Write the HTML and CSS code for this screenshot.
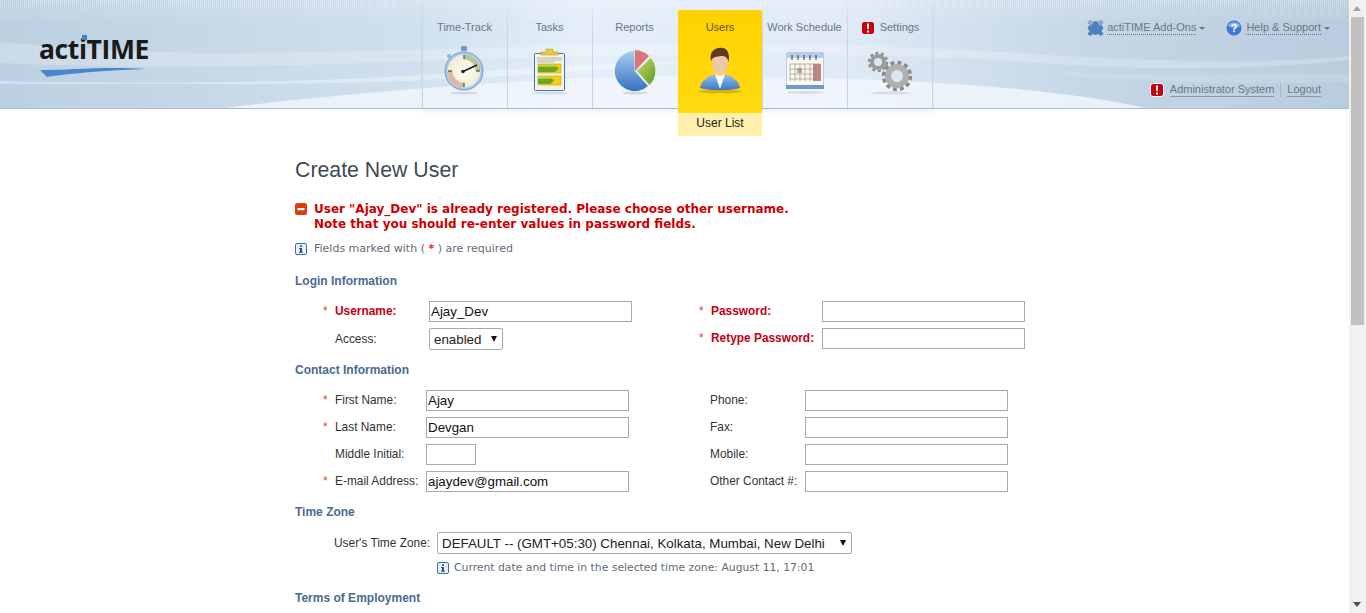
FILE: index.html
```html
<!DOCTYPE html>
<html>
<head>
<meta charset="UTF-8">
<title>actiTIME - Create New User</title>
<link rel="stylesheet" href="styles.css">
</head>
<body>
<div class="page">
<div class="header">
	<svg class="header_bg" viewBox="0 0 1349 109" preserveAspectRatio="none">
		<defs>
			<linearGradient id="bgGrad" x1="0" x2="1" y1="0" y2="0">
				<stop offset="0" stop-color="#bdd0e1"/>
				<stop offset="0.3" stop-color="#cfdfed"/>
				<stop offset="0.43" stop-color="#e4eff9"/>
				<stop offset="0.62" stop-color="#e0ebf6"/>
				<stop offset="0.8" stop-color="#c6d7e7"/>
				<stop offset="1" stop-color="#b9ccdd"/>
			</linearGradient>
			<linearGradient id="fade" x1="0" x2="0" y1="0" y2="1">
				<stop offset="0" stop-color="#fff" stop-opacity="0.35"/>
				<stop offset="1" stop-color="#fff" stop-opacity="0"/>
			</linearGradient>
			<pattern id="stripes" width="2" height="24" patternUnits="userSpaceOnUse">
				<rect width="1" height="24" fill="#fff"/>
			</pattern>
			<mask id="stripeMask"><rect width="1349" height="24" fill="url(#fade)"/></mask>
		</defs>
		<rect width="1349" height="109" fill="url(#bgGrad)"/>
		<rect width="1349" height="24" fill="url(#stripes)" mask="url(#stripeMask)"/>
		<path d="M0 42 C60 47 120 52 210 53 C300 53 400 50 480 48 C600 45 800 40 1000 52 C1120 60 1250 66 1349 56 L1349 60 C1240 72 1120 70 1000 60 C800 50 600 56 450 60 C300 66 150 70 0 63Z" fill="#fff" fill-opacity="0.22"/>
		<path d="M0 81 C150 84 320 83 450 73 C520 68 620 63 700 61 C600 70 420 86 200 84 C120 84 60 84 0 84Z" fill="#fff" fill-opacity="0.35"/>
		<path d="M225 108 C320 96 400 90 480 84 C600 76 680 74 780 77 C950 80 1080 92 1145 108Z" fill="#f1f6fc" fill-opacity="0.85"/>
		<path d="M1066 72 C1180 78 1280 72 1349 74 L1349 82 C1280 84 1160 84 1066 76Z" fill="#fff" fill-opacity="0.12"/>
		<rect y="108" width="1349" height="1" fill="#a7bdd3"/>
	</svg>

	<div class="logo">
		<span class="logo_text">actiTIME<i class="logo_dot"></i></span>
		<svg class="logo_swoosh" width="110" height="14" viewBox="0 0 110 14"><path d="M1 4 C30 4 70 0 106 3 C80 4 40 6 8 11Z" fill="#4a86d0"/></svg>
	</div>

	<ul class="nav">
		<li class="tab">
			<div class="tab_name">Time-Track</div>
			<svg class="tab_icon" viewBox="0 0 50 50">
				<defs>
					<radialGradient id="face"><stop offset="0" stop-color="#fffef6"/><stop offset="1" stop-color="#eeebd4"/></radialGradient>
				</defs>
				<ellipse cx="24" cy="48" rx="14" ry="1.500" fill="#9aa6b0" opacity=".35"/>
				<rect x="21" y="1" width="6" height="5" rx="1" fill="#6d9ad6"/>
				<circle cx="9" cy="11" r="2" fill="#8db0de"/>
				<circle cx="24" cy="26" r="19" fill="#a9c8ec" stroke="#6f9ad4"/>
				<circle cx="24" cy="26" r="16.500" fill="url(#face)"/>
				<path d="M24 12 A14 14 0 0 1 38 26" fill="none" stroke="#b4c793" stroke-width="5"/>
				<path d="M24 40 A14 14 0 0 1 10 26" fill="none" stroke="#e2b6a0" stroke-width="5"/>
				<path d="M24 10v4M24 38v4M8 26h4M36 26h4" stroke="#333" stroke-width="1"/>
				<path d="M22 27 L37 20" stroke="#222" stroke-width="1.600"/>
				<circle cx="23" cy="26.500" r="1.800" fill="#222"/>
			</svg>
		</li>
		<li class="tab">
			<div class="tab_name">Tasks</div>
			<svg class="tab_icon" viewBox="0 0 50 50">
				<ellipse cx="25" cy="48" rx="18" ry="1.500" fill="#9aa6b0" opacity=".3"/>
				<rect x="9.500" y="8.500" width="30" height="37" rx="1" fill="#f7f3e2" stroke="#3f72c0"/>
				<path d="M16 10 v-3 h5 v-3 h7 v3 h5 v3z" fill="#e8c93c" stroke="#b89a20" stroke-width=".5"/>
				<path d="M12 13h25M12 15h25M12 17h17" stroke="#999" stroke-width=".7"/>
				<rect x="13" y="19" width="23" height="9" fill="#f2cd1a" stroke="#b59a18" stroke-width=".5"/>
				<rect x="13" y="31" width="23" height="9" fill="#f2cd1a" stroke="#b59a18" stroke-width=".5"/>
				<path d="M13 20h17l4 3.500 -4 3.500h-17z" fill="#6fa51c"/>
				<path d="M13 32h12l4 3.500 -4 3.500h-12z" fill="#6fa51c"/>
				<path d="M13 20h17l2 1.800h-19z" fill="#b0dc55"/>
				<path d="M13 32h12l2 1.800h-14z" fill="#b0dc55"/>
			</svg>
		</li>
		<li class="tab">
			<div class="tab_name">Reports</div>
			<svg class="tab_icon" viewBox="0 0 50 50">
				<defs>
					<linearGradient id="pieBlue" x1="0" x2="0" y1="0" y2="1"><stop offset="0" stop-color="#a9cdf0"/><stop offset="1" stop-color="#3673bf"/></linearGradient>
					<linearGradient id="pieGreen" x1="0" x2="1" y1="0" y2="1"><stop offset="0" stop-color="#c5dd6a"/><stop offset="1" stop-color="#5d9a1a"/></linearGradient>
				</defs>
				<ellipse cx="25" cy="48" rx="13" ry="1.500" fill="#9aa6b0" opacity=".35"/>
				<path d="M24.500 6 A20 20 0 1 0 38 41 L24.500 26Z" fill="url(#pieBlue)"/>
				<path d="M25 5 A21 21 0 0 1 39 11 L25 26Z" fill="#d9757b"/>
				<path d="M40.700 13 A20 20 0 0 1 39.500 40 L27 26Z" fill="url(#pieGreen)"/>
			</svg>
		</li>
		<li class="tab tab_active">
			<div class="tab_name">Users</div>
			<svg class="tab_icon" viewBox="0 0 50 50">
				<defs>
					<linearGradient id="suit" x1="0" x2="0" y1="0" y2="1"><stop offset="0" stop-color="#9cc2ec"/><stop offset="1" stop-color="#3a76c0"/></linearGradient>
				</defs>
				<ellipse cx="25" cy="46.500" rx="22" ry="1.800" fill="#a88c00" opacity=".45"/>
				<path d="M5 43 C6 36 12 32 19 29 L25 33 L31 29 C38 32 44 36 45 43 C35 46 15 46 5 43Z" fill="url(#suit)"/>
				<path d="M20 29 L25 44 L30 29 L25 31Z" fill="#fff"/>
				<ellipse cx="25" cy="18" rx="8" ry="11.500" fill="#efc9a6"/>
				<path d="M16 16 C14 7 20 2 27 3 C33 3 35 10 33.500 17 C32.500 12 30 11 26 11 C22 12 18 11 16 16Z" fill="#5b3a26"/>
			</svg>
			<div class="sub_tab">User List</div>
		</li>
		<li class="tab">
			<div class="tab_name">Work Schedule</div>
			<svg class="tab_icon" viewBox="0 0 50 50">
				<ellipse cx="25" cy="47.500" rx="18" ry="1.500" fill="#9aa6b0" opacity=".3"/>
				<rect x="6" y="7" width="38" height="37" rx="2" fill="#b4cdea"/>
				<rect x="6" y="40" width="38" height="4" fill="#6f9ad0"/>
				<rect x="7" y="13" width="36" height="27" fill="#faf8ee"/>
				<rect x="33" y="19" width="8" height="17" fill="#c9837f"/>
				<rect x="17" y="23" width="5" height="5" fill="#d39f9c"/>
				<path d="M10 19v17M15 19v17M20 19v17M25 19v17M30 19v17M35 19v17M10 19h31M10 24h31M10 29h31M10 34h31" stroke="#8b8b84" stroke-width=".6" fill="none"/>
				<path d="M12 10v5M18 10v5M24 10v5M30 10v5M36 10v5" stroke="#333" stroke-width="1"/>
			</svg>
		</li>
		<li class="tab tab_last">
			<div class="tab_name"><svg class="alert_icon" viewBox="0 0 14 14"><rect x="0.500" y="0.500" width="13" height="13" rx="2.500" fill="#c8000a" stroke="#fff"/><rect x="6" y="2.500" width="2" height="5.500" fill="#fff"/><rect x="6" y="9.500" width="2" height="2" fill="#fff"/></svg>Settings</div>
			<svg class="tab_icon" viewBox="0 0 50 50">
				<ellipse cx="26" cy="48" rx="20" ry="1.500" fill="#9aa6b0" opacity=".3"/>
				<circle cx="13" cy="17" r="6" fill="none" stroke="#9a9a96" stroke-width="4"/>
				<circle cx="13" cy="17" r="9" fill="none" stroke="#8f8f8c" stroke-width="2.500" stroke-dasharray="3 2.650"/>
				<circle cx="32" cy="31" r="9" fill="none" stroke="#b0b0ae" stroke-width="6"/>
				<circle cx="32" cy="31" r="13.500" fill="none" stroke="#8a8a88" stroke-width="3.500" stroke-dasharray="4 3.070"/>
			</svg>
		</li>
	</ul>

	<div class="top_right">
		<div class="top_links">
			<span class="drop">
				<svg class="small_icon puzzle_icon" viewBox="0 0 16 16"><path d="M0 2 L3 0 L5 2 L8 1 L11 2 L13 0 L16 2 L14 5 L16 8 L14 11 L16 14 L13 16 L11 14 L8 15 L5 14 L3 16 L0 14 L2 11 L0 8 L2 5Z" fill="#4f7fbd"/><path d="M0 2 L3 0 L6 3 L3 6Z M13 0 L16 2 L13 6 L10 3Z" fill="#93a9c4"/></svg>
				<span class="dotted">actiTIME Add-Ons</span><i class="caret"></i>
			</span>
			<span class="drop">
				<svg class="small_icon" viewBox="0 0 16 16"><circle cx="8" cy="8" r="7.500" fill="#3f7ad6"/><path d="M2 6 A6.500 6 0 0 1 14 6 C10 8 6 8 2 6Z" fill="#8db5ee"/><text x="8" y="12" font-size="11" font-weight="bold" font-family="Liberation Sans" text-anchor="middle" fill="#fff">?</text></svg>
				<span class="dotted">Help &amp; Support</span><i class="caret"></i>
			</span>
		</div>
		<div class="user_links">
			<svg class="alert_icon" viewBox="0 0 14 14"><rect x="0.500" y="0.500" width="13" height="13" rx="2.500" fill="#c8000a" stroke="#fff"/><rect x="6" y="2.500" width="2" height="5.500" fill="#fff"/><rect x="6" y="9.500" width="2" height="2" fill="#fff"/></svg>
			<a class="user_link">Administrator System</a>
			<span class="user_sep"></span>
			<a class="user_link">Logout</a>
		</div>
	</div>
</div>

<div class="content">
	<h1 class="page_title">Create New User</h1>

	<div class="error_box">
		<svg class="error_icon" viewBox="0 0 12 12"><rect width="12" height="12" rx="2.500" fill="#e03a10"/><rect x="2.500" y="5" width="7" height="2.200" fill="#fff"/></svg>
		<div>User "Ajay_Dev" is already registered. Please choose other username.<br>Note that you should re-enter values in password fields.</div>
	</div>

	<div class="hint hint_required">
		<svg class="info_icon" viewBox="0 0 12 12"><rect x="0.500" y="0.500" width="11" height="11" rx="1.500" fill="#e8f1fa" stroke="#3f6f9f"/><rect x="5" y="2.300" width="2" height="1.600" fill="#274f7f"/><path d="M4 5h3v3.700h1v1H4v-1h1V6H4z" fill="#274f7f"/></svg>
		<span>Fields marked with ( <b class="req_mark">*</b> ) are required</span>
	</div>

	<h2 class="section_title title_login">Login Information</h2>
	<div class="form_group login_group">
		<div class="form_row">
			<label class="field_label req err"><i>*</i>Username:</label>
			<input class="text_input" type="text" value="Ajay_Dev">
			<span></span>
			<label class="field_label req err"><i>*</i>Password:</label>
			<input class="text_input" type="password">
		</div>
		<div class="form_row">
			<label class="field_label label_access">Access:</label>
			<div class="select_box select_access">enabled<i class="select_arrow"></i></div>
			<span></span>
			<label class="field_label req err"><i>*</i>Retype Password:</label>
			<input class="text_input" type="password">
		</div>
	</div>

	<h2 class="section_title title_contact">Contact Information</h2>
	<div class="form_group contact_group">
		<div class="form_row">
			<label class="field_label req"><i>*</i>First Name:</label>
			<input class="text_input" type="text" value="Ajay">
			<span></span>
			<label class="field_label">Phone:</label>
			<input class="text_input" type="text">
		</div>
		<div class="form_row">
			<label class="field_label req"><i>*</i>Last Name:</label>
			<input class="text_input" type="text" value="Devgan">
			<span></span>
			<label class="field_label">Fax:</label>
			<input class="text_input" type="text">
		</div>
		<div class="form_row">
			<label class="field_label">Middle Initial:</label>
			<div><input class="text_input input_short" type="text"></div>
			<span></span>
			<label class="field_label">Mobile:</label>
			<input class="text_input" type="text">
		</div>
		<div class="form_row">
			<label class="field_label req"><i>*</i>E-mail Address:</label>
			<input class="text_input" type="text" value="ajaydev@gmail.com">
			<span></span>
			<label class="field_label">Other Contact #:</label>
			<input class="text_input" type="text">
		</div>
	</div>

	<h2 class="section_title title_zone">Time Zone</h2>
	<div class="zone_row">
		<label class="field_label zone_label">User's Time Zone:</label>
		<div class="select_box select_zone">DEFAULT -- (GMT+05:30) Chennai, Kolkata, Mumbai, New Delhi<i class="select_arrow"></i></div>
	</div>
	<div class="hint hint_zone">
		<svg class="info_icon" viewBox="0 0 12 12"><rect x="0.500" y="0.500" width="11" height="11" rx="1.500" fill="#e8f1fa" stroke="#3f6f9f"/><rect x="5" y="2.300" width="2" height="1.600" fill="#274f7f"/><path d="M4 5h3v3.700h1v1H4v-1h1V6H4z" fill="#274f7f"/></svg>
		<span>Current date and time in the selected time zone: August 11, 17:01</span>
	</div>

	<h2 class="section_title title_terms">Terms of Employment</h2>
</div>
</div>

<div class="scrollbar">
	<div class="scroll_btn"><i class="scroll_up"></i></div>
	<div class="scroll_thumb"></div>
	<div class="scroll_track"></div>
	<div class="scroll_btn"><i class="scroll_down"></i></div>
</div>
</body>
</html>
```

FILE: styles.css
```css
/* reset */
html, body {margin:0; padding:0; height:100%; overflow:hidden; background:#fff;}
h1, h2, ul, li {margin:0; padding:0; list-style:none; font-weight:normal;}
i {font-style:normal;}
body {display:flex; font-family:"Liberation Sans",Arial,sans-serif; font-size:12px; color:#333;}

.page {flex:1; min-width:0; height:613px; overflow:hidden;}

/* header */
.header {position:relative; display:flex; height:109px;}
.header_bg {position:absolute; left:0; top:0; width:100%; height:109px;}
.logo {position:relative; width:383px; padding:32px 0 0 39px;}
.logo_text {position:relative; display:block; font-family:"Open Sans",sans-serif; font-weight:700; font-size:26.500px; line-height:34px; letter-spacing:-0.400px; color:#1a1a1a;}
.logo_dot {position:absolute; left:43px; top:3px; width:5px; height:5px; background:#2e8ad0;}
.logo_swoosh {display:block; margin-top:0;}

.nav {position:relative; display:flex; align-items:flex-start; box-shadow:0 3px 3px rgba(120,130,140,0.12);}
.tab {box-sizing:border-box; width:85px; height:109px; padding-top:20px; background:linear-gradient(rgba(190,205,230,0),#c5d4e8 30%) no-repeat 0 0 / 1px 108px; text-align:center;}
.tab_last {width:86px; background:linear-gradient(rgba(190,205,230,0),#c5d4e8 30%) no-repeat 0 0 / 1px 108px, linear-gradient(rgba(190,205,230,0),#c5d4e8 30%) no-repeat 100% 0 / 1px 108px;}
.tab_name {display:flex; justify-content:center; align-items:center; height:15px; font-size:11px; line-height:15px; color:#6b7684; white-space:nowrap;}
.tab_icon {display:block; width:50px; height:50px; margin:10px auto 0;}
.tab_active {position:relative; width:84px; height:126px; margin:10px 0 0 1px; padding-top:10px; border-radius:3px; background:linear-gradient(#ffd200,#ffdc14);}
.tab_active .tab_name {color:#5f5230;}
.sub_tab {height:23px; margin-top:18px; border-radius:0 0 3px 3px; background:#fff1ad; font-size:12px; line-height:21px; color:#222;}
.alert_icon {flex:none; display:block; width:14px; height:14px; margin-right:5px;}

.top_right {position:relative; flex:1; padding:20px 19px 0 0; font-size:11px; color:#6b7684;}
.top_links {display:flex; justify-content:flex-end; gap:21px; height:16px;}
.drop {display:flex; align-items:center; height:16px; white-space:nowrap;}
.small_icon {width:16px; height:16px; margin-right:4px;}
.puzzle_icon {width:17px; margin-right:3px;}
.dotted {line-height:13px; border-bottom:1px dotted #66707c;}
.caret {width:0; height:0; margin-left:3px; border:3px solid transparent; border-top:3px solid #6b7684; border-bottom:0;}
.user_links {display:flex; justify-content:flex-end; align-items:center; height:16px; margin-top:46px; padding-right:9px; white-space:nowrap;}
.user_links .alert_icon {margin-right:6px;}
.user_link {line-height:13px; border-bottom:1px solid #8b97a4;}
.user_sep {width:1px; height:14px; margin:0 6px; background:#a9b6c3;}

/* content */
.content {padding:0 0 0 295px;}
.page_title {padding-top:49px; font-size:21.300px; line-height:24px; color:#3f4a56;}
.error_box {display:flex; margin-top:20px; font-family:"DejaVu Sans",Verdana,sans-serif; font-weight:bold; font-size:12px; line-height:15px; color:#cc0000;}
.error_icon {flex:none; width:12px; height:12px; margin:1px 7px 0 0;}
.hint {display:flex; align-items:center; font-family:"DejaVu Sans",Verdana,sans-serif; font-size:11px; line-height:14px; color:#5f6b78;}
.hint_required {margin-top:10px;}
.info_icon {flex:none; width:12px; height:12px; margin-right:7px;}
.req_mark {color:#ee2020;}
.section_title {font-size:12px; font-weight:bold; line-height:14px; color:#4a6a92;}
.title_login {margin-top:18px;}
.title_contact {margin-top:14px;}
.title_zone {margin-top:13px;}
.title_terms {margin-top:16px;}

/* form rows */
.form_group {display:flex; flex-direction:column; gap:6px; padding-left:40px;}
.login_group {margin-top:13px;}
.contact_group {margin-top:13px;}
.form_row {display:grid; grid-template-rows:21px; align-items:center; height:21px;}
.login_group .form_row {grid-template-columns:94px 203px 79px 111px 203px;}
.contact_group .form_row {grid-template-columns:91px 203px 81px 95px 203px;}
.form_row .field_label {margin-bottom:2px;}
.form_row .label_access {margin-bottom:0;}
.form_row .select_box {margin-bottom:-1px;}
.field_label {position:relative; display:block; font-size:11.900px; line-height:14px; color:#333; white-space:nowrap;}
.field_label i {position:absolute; left:-12px; top:0; color:#e83a30; font-weight:normal;}
.err {color:#c40012; font-weight:bold;}
.text_input {box-sizing:border-box; display:block; width:203px; height:21px; margin:0; padding:0 1px; border:1px solid #a9a9a9; background:#fff; font-family:"Liberation Sans",Arial,sans-serif; font-size:13.333px; color:#111; outline:0;}
.input_short {width:50px;}

.select_box {position:relative; box-sizing:border-box; height:22px; padding-left:4px; border:1px solid #a9a9a9; border-radius:2px; background:#fff; font-size:13.333px; line-height:21px; color:#222; white-space:nowrap;}
.select_access {width:74px;}
.select_zone {width:415px;}
.select_arrow {position:absolute; right:5px; top:7px; width:0; height:0; border:3.500px solid transparent; border-top:6px solid #111; border-bottom:0;}
.zone_row {display:flex; align-items:center; margin-top:13px; padding-left:39px;}
.zone_label {width:103px;}
.hint_zone {margin-top:7px; padding-left:142px; font-size:10.800px;}
.hint_zone .info_icon {margin-right:5px;}

/* fake scrollbar, the shot has a classic one */
.scrollbar {flex:none; display:flex; flex-direction:column; width:17px; height:613px; background:#f1f1f1;}
.scroll_btn {position:relative; flex:none; height:17px;}
.scroll_up, .scroll_down {position:absolute; left:4px; top:6px; width:0; height:0; border:4px solid transparent;}
.scroll_up {border-top:0; border-bottom:5px solid #a3a3a3;}
.scroll_down {border-bottom:0; border-top:5px solid #505050;}
.scroll_thumb {flex:none; height:308px; margin:0 2px; background:#c1c1c1;}
.scroll_track {flex:1;}
```
